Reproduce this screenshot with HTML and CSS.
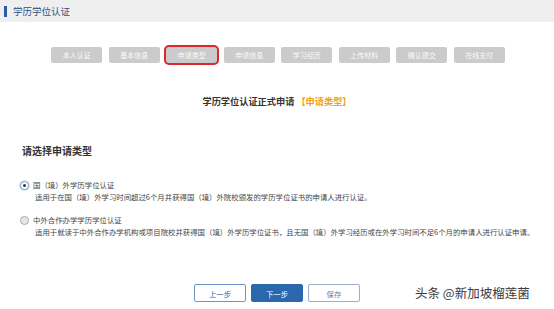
FILE: index.html
```html
<!DOCTYPE html>
<html lang="zh-CN">
<head>
    <meta charset="UTF-8">
    <title>学历学位认证</title>
    <link rel="stylesheet" href="styles.css">
</head>
<body>
    <div class="header"><span class="mark"></span>学历学位认证</div>

    <div class="steps">
        <span class="step">本人认证</span>
        <span class="step">基本信息</span>
        <span class="step active">申请类型</span>
        <span class="step">申请信息</span>
        <span class="step">学习经历</span>
        <span class="step">上传材料</span>
        <span class="step">确认提交</span>
        <span class="step">在线支付</span>
    </div>

    <div class="title">学历学位认证正式申请 <span class="tag">【申请类型】</span></div>

    <div class="section">
        <h2>请选择申请类型</h2>
        <div class="option first">
            <div class="label"><span class="radio checked"></span>国（境）外学历学位认证</div>
            <div class="desc">适用于在国（境）外学习时间超过6个月并获得国（境）外院校颁发的学历学位证书的申请人进行认证。</div>
        </div>
        <div class="option">
            <div class="label"><span class="radio"></span>中外合作办学学历学位认证</div>
            <div class="desc">适用于就读于中外合作办学机构或项目院校并获得国（境）外学历学位证书，且无国（境）外学习经历或在外学习时间不足6个月的申请人进行认证申请。</div>
        </div>
    </div>

    <div class="actions">
        <button class="btn">上一步</button>
        <button class="btn primary">下一步</button>
        <button class="btn gray">保存</button>
    </div>

    <div class="watermark">头条 @新加坡榴莲菌</div>
</body>
</html>
```

FILE: styles.css
```css
body {
    margin: 0;
    font-family: "Noto Sans CJK SC", "Liberation Sans", sans-serif;
    background-color: #fff;
    color: #333;
    position: relative;
    height: 309px;
    overflow: hidden;
}
.header {
    height: 22px;
    background-color: #efefef;
    display: flex;
    align-items: center;
    font-size: 9.5px;
    color: #2d4f80;
    padding-left: 4px;
}
.mark {
    width: 3px;
    height: 11px;
    background-color: #2a5ba3;
    margin-right: 6px;
}
.steps {
    display: flex;
    justify-content: center;
    gap: 6.5px;
    margin-top: 25px;
    padding-left: 2px;
}
.step {
    width: 51px;
    height: 16px;
    line-height: 16px;
    text-align: center;
    background-color: #cbcbcb;
    color: #fafafa;
    font-size: 7px;
    border-radius: 2px;
}
.step.active {
    box-shadow: 0 0 0 2px #e0262a;
    border-radius: 3px;
}
.title {
    margin-top: 32px;
    text-align: center;
    font-size: 9.2px;
    line-height: 12px;
    font-weight: bold;
    color: #333;
}
.tag {
    color: #f0a020;
}
.section {
    padding-left: 22px;
}
.section h2 {
    margin: 37px 0 0;
    font-size: 10px;
    line-height: 14px;
    font-weight: bold;
    color: #333;
}
.option {
    margin-top: 11px;
    font-size: 7.4px;
    line-height: 12px;
    color: #444;
}
.option.first {
    margin-top: 21px;
}
.label {
    display: flex;
    align-items: center;
    margin-left: -2px;
}
.radio {
    width: 7px;
    height: 7px;
    border: 1px solid #aaa;
    border-radius: 50%;
    background-color: #e6e6e6;
    margin-right: 4px;
    position: relative;
}
.radio.checked {
    background-color: #fff;
    border-color: #7a9cc8;
    box-shadow: 0 0 0 1px #d6e4f4;
}
.radio.checked::after {
    content: "";
    position: absolute;
    left: 2px;
    top: 2px;
    width: 3px;
    height: 3px;
    border-radius: 50%;
    background-color: #333;
}
.desc {
    padding-left: 13px;
}
.actions {
    display: flex;
    justify-content: center;
    gap: 5px;
    margin-top: 46px;
}
.btn {
    width: 52px;
    height: 18px;
    font-family: inherit;
    font-size: 7.4px;
    padding: 0;
    border: 1px solid #6f93c4;
    background-color: #fff;
    color: #2f62a8;
    border-radius: 2px;
}
.btn.primary {
    background-color: #2b67ad;
    border-color: #2b67ad;
    color: #fff;
}
.btn.gray {
    border-color: #9aaccc;
    color: #6a80a8;
}
.watermark {
    position: absolute;
    left: 415px;
    top: 284px;
    font-size: 12.5px;
    line-height: 18px;
    color: #3a3a3a;
    text-shadow: 0 0 2px #fff;
}
```
